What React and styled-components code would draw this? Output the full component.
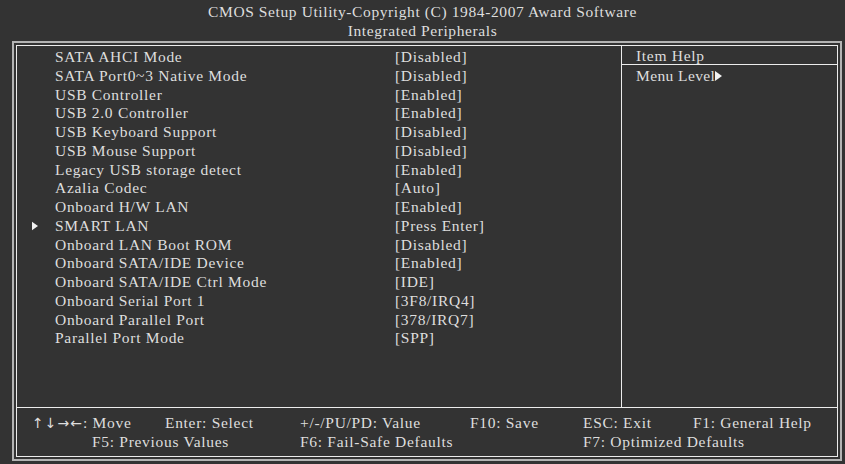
import React from 'react';
import styled, { createGlobalStyle } from 'styled-components';

const items = [
    { label: 'SATA AHCI Mode', value: '[Disabled]' },
    { label: 'SATA Port0~3 Native Mode', value: '[Disabled]' },
    { label: 'USB Controller', value: '[Enabled]' },
    { label: 'USB 2.0 Controller', value: '[Enabled]' },
    { label: 'USB Keyboard Support', value: '[Disabled]' },
    { label: 'USB Mouse Support', value: '[Disabled]' },
    { label: 'Legacy USB storage detect', value: '[Enabled]' },
    { label: 'Azalia Codec', value: '[Auto]' },
    { label: 'Onboard H/W LAN', value: '[Enabled]' },
    { label: 'SMART LAN', value: '[Press Enter]', sub: true },
    { label: 'Onboard LAN Boot ROM', value: '[Disabled]' },
    { label: 'Onboard SATA/IDE Device', value: '[Enabled]' },
    { label: 'Onboard SATA/IDE Ctrl Mode', value: '[IDE]' },
    { label: 'Onboard Serial Port 1', value: '[3F8/IRQ4]' },
    { label: 'Onboard Parallel Port', value: '[378/IRQ7]' },
    { label: 'Parallel Port Mode', value: '[SPP]' },
];

const Global = createGlobalStyle`
    html, body {
        margin: 0;
        padding: 0;
        background: #333333;
    }
    body {
        width: 845px;
        height: 464px;
        overflow: hidden;
        font-family: "Liberation Serif", "Times New Roman", serif;
        font-size: 15.5px;
        letter-spacing: 0.7px;
        color: #dedede;
    }
`;

const Screen = styled.div`
    width: 845px;
    height: 464px;
    background: #333333;
    box-sizing: border-box;
    padding: 2px 3px 0 12px;
`;

const Header = styled.div`
    text-align: center;
    line-height: 19px;
    margin-left: -12px;
    margin-right: -3px;
    height: 39px;
    letter-spacing: 0.6px;
`;

const Outer = styled.div`
    width: 830px;
    height: 420px;
    box-sizing: border-box;
    border: 2px solid #b4b4b4;
    padding: 2px;
`;

const Inner = styled.div`
    height: 100%;
    box-sizing: border-box;
    border: 1px solid #ececec;
    display: flex;
    flex-direction: column;
`;

const Body = styled.div`
    flex: 1;
    display: grid;
    grid-template-columns: 605px 1fr;
    border-bottom: 1px solid #ececec;
`;

const List = styled.div`
    border-right: 1px solid #ececec;
    padding-top: 2px;
`;

const Row = styled.div`
    display: grid;
    grid-template-columns: 38px 340px 1fr;
    height: 18.75px;
    line-height: 18.75px;
    white-space: nowrap;
`;

const Mark = styled.span`
    display: flex;
    align-items: center;
    padding-left: 15px;
`;

const Help = styled.div`
    display: flex;
    flex-direction: column;
`;

const HelpTitle = styled.div`
    height: 18px;
    line-height: 20px;
    padding-left: 14px;
    border-bottom: 1px solid #ececec;
`;

const HelpLine = styled.div`
    padding-left: 14px;
    line-height: 22px;
    display: flex;
    align-items: center;
    letter-spacing: 0.4px;
`;

const Footer = styled.div`
    height: 48px;
    display: grid;
    grid-template-columns: 135px 135px 170px 113px 110px 1fr;
    grid-template-rows: 19px 19px;
    padding: 5px 0 0 13px;
    box-sizing: border-box;
    line-height: 19px;
    white-space: nowrap;
`;

const Key = styled.span`
    grid-column: ${p => p.col || 'auto'};
    padding-left: ${p => p.indent || 0}px;
`;

const Arrows = styled.span`
    font-family: "DejaVu Sans", sans-serif;
    font-size: 14px;
    line-height: 0;
    letter-spacing: 1px;
    padding-left: 2px;
`;

const Triangle = ({ w = 7, h = 10 }) => (
    <svg width={w} height={h} viewBox="0 0 7 10">
        <polygon points="0,0 7,5 0,10" fill="#f2f2f2" />
    </svg>
);

const App = () => {
    return (
        <React.Fragment>
            <Global />
            <Screen>
                <Header>
                    <div>CMOS Setup Utility-Copyright (C) 1984-2007 Award Software</div>
                    <div>Integrated Peripherals</div>
                </Header>
                <Outer>
                    <Inner>
                        <Body>
                            <List>
                                {items.map((l, index) => (
                                    <Row key={index}>
                                        <Mark>{l.sub && <Triangle w={6} h={10} />}</Mark>
                                        <span>{l.label}</span>
                                        <span>{l.value}</span>
                                    </Row>
                                ))}
                            </List>
                            <Help>
                                <HelpTitle>Item Help</HelpTitle>
                                <HelpLine>Menu Level<Triangle /></HelpLine>
                            </Help>
                        </Body>
                        <Footer>
                            <Key><Arrows>↑↓→←</Arrows>: Move</Key>
                            <Key>Enter: Select</Key>
                            <Key>+/-/PU/PD: Value</Key>
                            <Key>F10: Save</Key>
                            <Key>ESC: Exit</Key>
                            <Key>F1: General Help</Key>
                            <Key col="1 / 3" indent={62}>F5: Previous Values</Key>
                            <Key col="3 / 5">F6: Fail-Safe Defaults</Key>
                            <Key col="5 / 7">F7: Optimized Defaults</Key>
                        </Footer>
                    </Inner>
                </Outer>
            </Screen>
        </React.Fragment>
    );
};

export default App;
